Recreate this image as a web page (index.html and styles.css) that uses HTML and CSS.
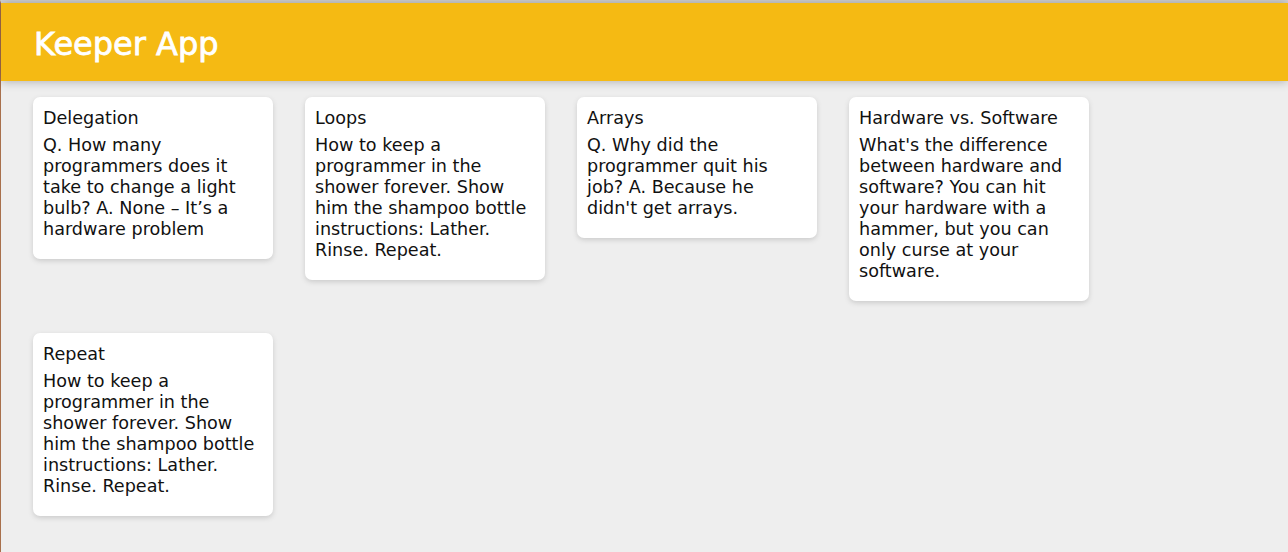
FILE: index.html
```html
<!DOCTYPE html>
<html lang="en">
<head>
<meta charset="utf-8">
<title>Keeper App</title>
<link rel="stylesheet" href="styles.css">
</head>
<body>
<div class="frame">
  <header class="app-header">
    <h1 class="app-title">Keeper App</h1>
  </header>
  <main class="notes">
    <div class="note">
      <h2 class="note-title">Delegation</h2>
      <p class="note-text">Q. How many programmers does it take to change a light bulb? A. None – It’s a hardware problem</p>
    </div>
    <div class="note">
      <h2 class="note-title">Loops</h2>
      <p class="note-text">How to keep a programmer in the shower forever. Show him the shampoo bottle instructions: Lather. Rinse. Repeat.</p>
    </div>
    <div class="note">
      <h2 class="note-title">Arrays</h2>
      <p class="note-text">Q. Why did the programmer quit his job? A. Because he didn't get arrays.</p>
    </div>
    <div class="note">
      <h2 class="note-title">Hardware vs. Software</h2>
      <p class="note-text">What's the difference between hardware and software? You can hit your hardware with a hammer, but you can only curse at your software.</p>
    </div>
    <div class="note">
      <h2 class="note-title">Repeat</h2>
      <p class="note-text">How to keep a programmer in the shower forever. Show him the shampoo bottle instructions: Lather. Rinse. Repeat.</p>
    </div>
  </main>
</div>
</body>
</html>
```
FILE: styles.css
```css
* {
  margin: 0;
  padding: 0;
  box-sizing: border-box;
}

html, body {
  height: 100%;
}

body {
  background: #eeeeee;
  font-family: "DejaVu Sans", "Liberation Sans", sans-serif;
  overflow: hidden;
}

.frame {
  min-height: 100%;
  border-top: 3px solid #d6d6d6;
  border-left: 1px solid #a8704c;
  background: #eeeeee;
}

.app-header {
  background: #f5ba13;
  padding: 19px 32px 14px 33px;
  box-shadow: 0 0 10px 0 rgba(0, 0, 0, 0.3);
  position: relative;
}

.app-title {
  color: #ffffff;
  font-family: "DejaVu Sans", sans-serif;
  font-size: 32px;
  font-weight: normal;
  line-height: 45px;
  -webkit-text-stroke: 0.8px #ffffff;
}

.notes {
  display: flex;
  flex-wrap: wrap;
  align-items: flex-start;
  padding: 0 16px;
}

.note {
  width: 240px;
  margin: 16px;
  padding: 11px 10px 9px;
  background: #ffffff;
  border-radius: 7px;
  box-shadow: 0 2px 5px #cccccc;
}

.note-title {
  font-size: 17.6px;
  font-weight: normal;
  line-height: 21px;
  margin-bottom: 6px;
  color: #111111;
}

.note-text {
  font-size: 17.6px;
  line-height: 21px;
  margin-bottom: 10px;
  color: #111111;
  white-space: pre-wrap;
  word-wrap: break-word;
}
```
